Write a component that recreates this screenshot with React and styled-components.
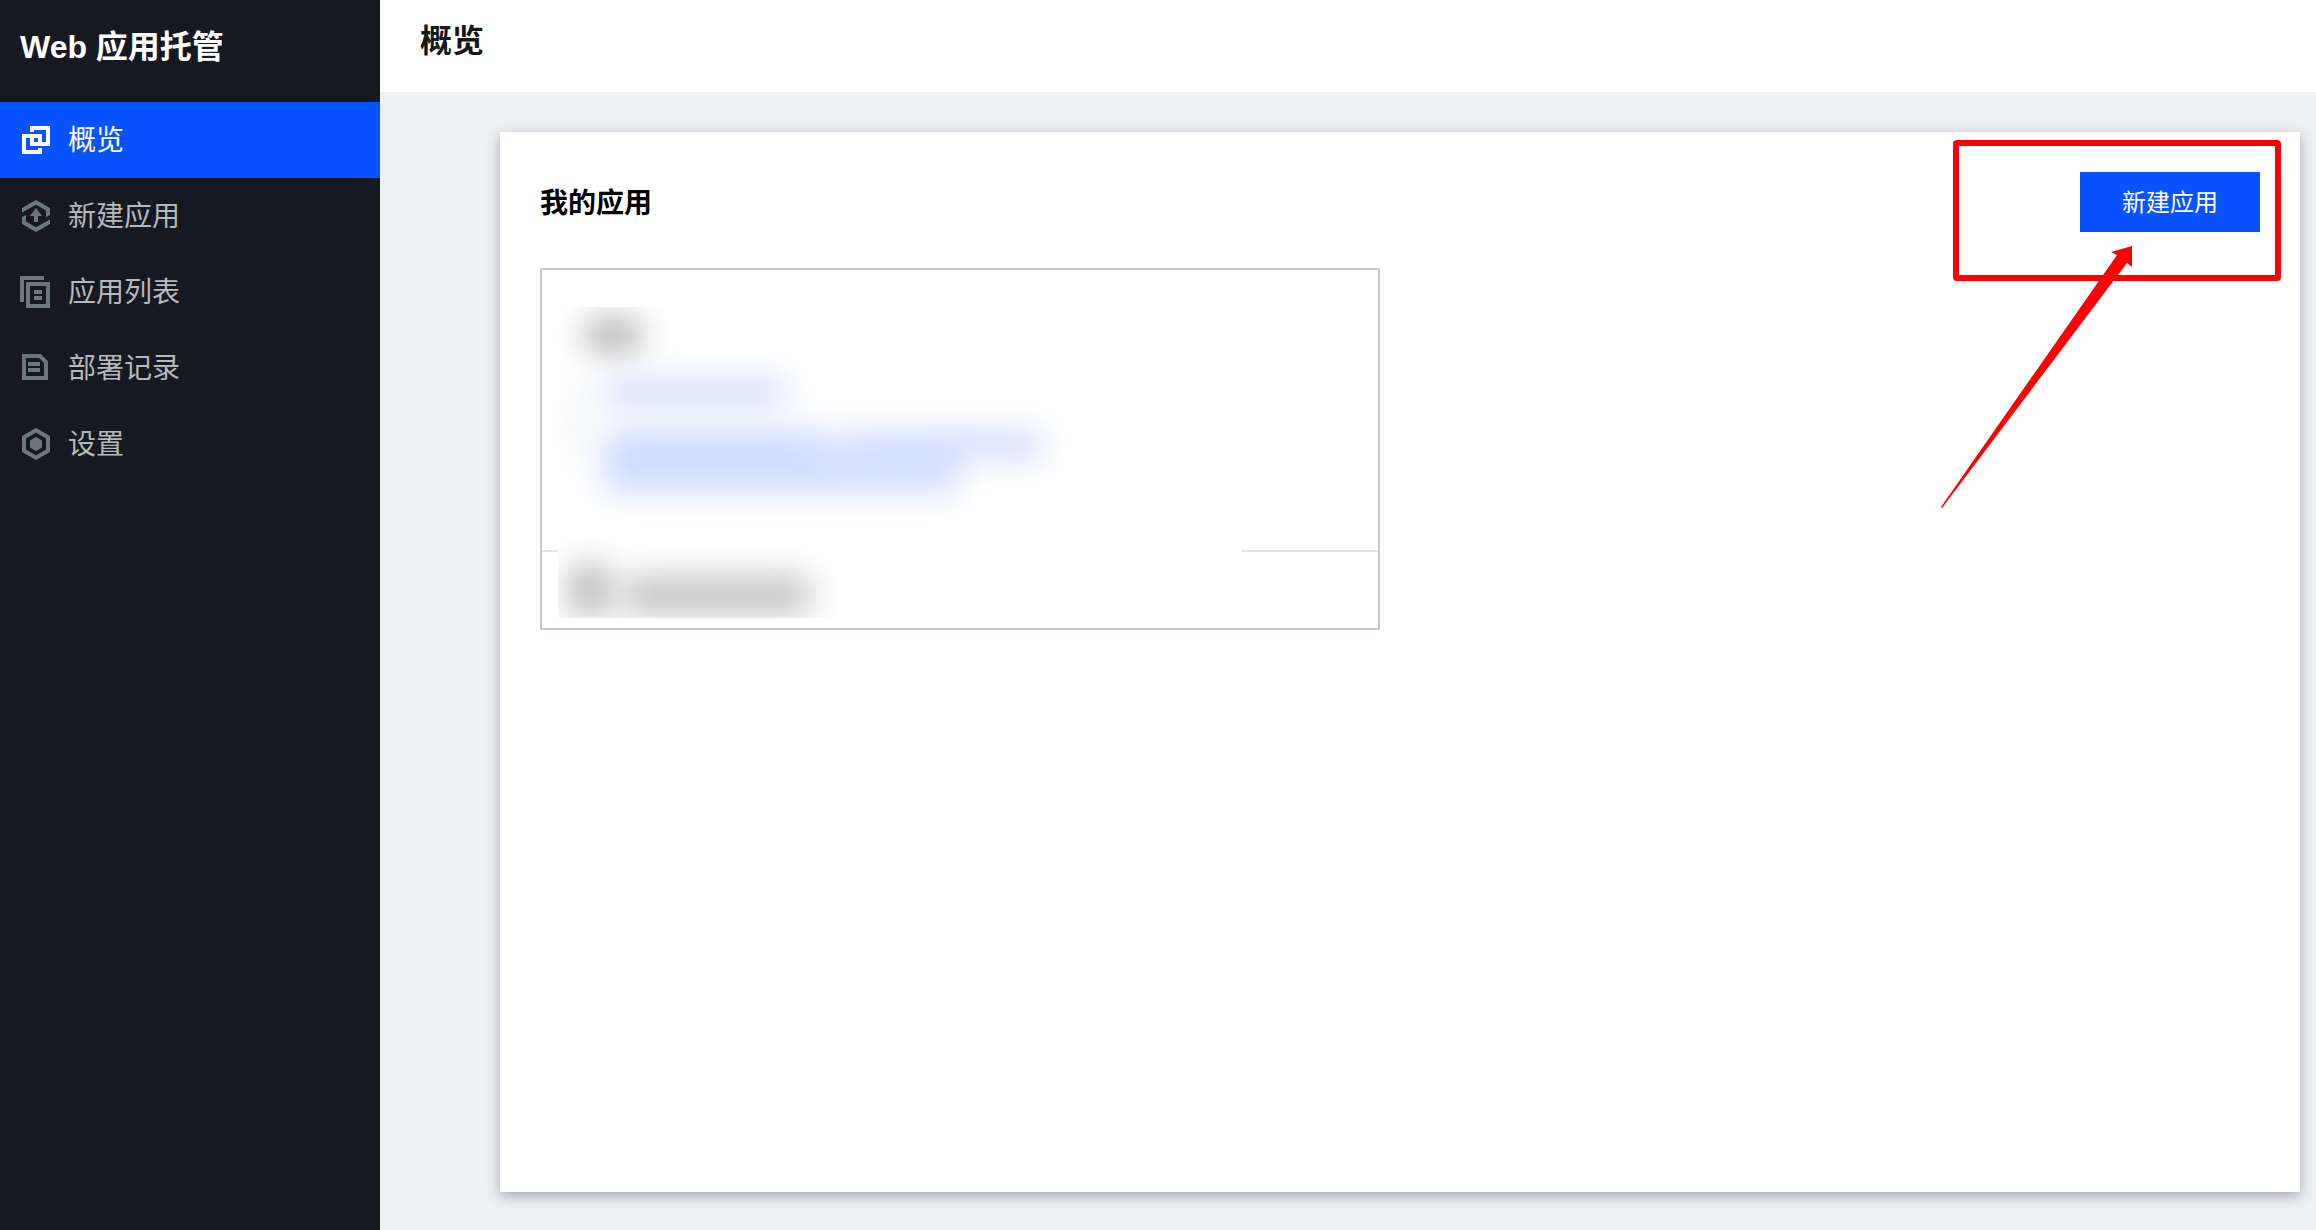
import React from 'react';
import styled, { createGlobalStyle } from 'styled-components';

const GlobalStyle = createGlobalStyle`
  * {
    box-sizing: border-box;
  }
  body {
    margin: 0;
    font-family: 'Liberation Sans', 'Noto Sans CJK SC', sans-serif;
    background-color: #eef0f4;
  }
  h1, h2, p, ul {
    margin: 0;
    padding: 0;
  }
`;

const Layout = styled.div`
  display: grid;
  grid-template-columns: 380px 1fr;
  min-height: 100vh;
`;

const Sidebar = styled.aside`
  background-color: #171922;
`;

const Brand = styled.p`
  height: 102px;
  padding: 23px 20px;
  color: #fff;
  font-size: 32px;
  font-weight: 700;
  line-height: 48px;
`;

const Menu = styled.ul`
  list-style: none;
`;

const MenuLink = styled.a`
  display: flex;
  align-items: center;
  gap: 16px;
  height: 76px;
  padding: 0 20px;
  color: ${({ $active }) => ($active ? '#fff' : '#b5b8bc')};
  background-color: ${({ $active }) => ($active ? '#0852ff' : 'transparent')};
  font-size: 28px;
  line-height: 40px;
  text-decoration: none;
  svg {
    width: 32px;
    height: 32px;
    flex: none;
    color: ${({ $active }) => ($active ? '#fff' : '#6b777e')};
  }
`;

const MenuLabel = styled.span`
  padding-top: 2px;
`;

const Main = styled.main`
  display: flex;
  flex-direction: column;
`;

const Header = styled.header`
  height: 92px;
  padding: 17px 40px;
  background-color: #fff;
`;

const PageTitle = styled.h1`
  color: #16181a;
  font-size: 32px;
  font-weight: 700;
  line-height: 48px;
`;

const Panel = styled.section`
  position: relative;
  flex: 1;
  margin: 40px 16px 38px 120px;
  padding: 40px;
  background-color: #fff;
  box-shadow: 0 4px 12px rgba(54, 58, 80, 0.4);
`;

const PanelHead = styled.div`
  display: flex;
  align-items: center;
  justify-content: space-between;
  margin-bottom: 36px;
`;

const PanelTitle = styled.h2`
  padding-top: 4px;
  color: #000;
  font-size: 28px;
  font-weight: 700;
  line-height: 40px;
`;

const CreateButton = styled.button`
  width: 180px;
  height: 60px;
  padding: 2px 0 0;
  border: 0;
  color: #fff;
  background-color: #0852ff;
  font-family: inherit;
  font-size: 24px;
  line-height: 36px;
`;

const AppCard = styled.article`
  position: relative;
  width: 49%;
  max-width: 840px;
  border: 2px solid #c4c8d5;
`;

const CardBody = styled.div`
  height: 280px;
`;

const CardFooter = styled.div`
  height: 78px;
  border-top: 2px solid #e2e5ea;
`;

// Covers the private details of the app
const Redacted = styled.div`
  position: absolute;
  inset: 37px 137px 10px 16px;
  overflow: hidden;
  background-color: #fff;
`;

const Smudges = styled.svg`
  display: block;
`;

const Highlight = styled.div`
  position: absolute;
  top: 8px;
  right: 19px;
  width: 328px;
  height: 141px;
  border: 6px solid #ff0005;
  border-radius: 4px;
  pointer-events: none;
`;

const Arrow = styled.svg`
  position: absolute;
  top: 114px;
  right: 168px;
  pointer-events: none;
`;

const OverviewIcon = () => (
  <svg viewBox="0 0 32 32" fill="none" stroke="currentColor" strokeWidth="4" aria-hidden="true">
    <path d="M12 8V4H28V20H12V14" />
    <path d="M20 24V28H4V12H20V18" />
  </svg>
);

const CreateIcon = () => (
  <svg viewBox="0 0 32 32" fill="currentColor" aria-hidden="true">
    <path d="M2 12.500V8L16 0L30 8V15L26 17V10.500L16 4.700Z" />
    <path d="M2 17L6 15V21.500L16 27.300L30 19.500V24L16 32L2 24Z" />
    <path d="M16 8L22 16H18V22H14V16H10Z" />
  </svg>
);

const ListIcon = () => (
  <svg viewBox="0 0 32 32" fill="none" stroke="currentColor" strokeWidth="4" aria-hidden="true">
    <path d="M24 2H2V26" />
    <path d="M8 8H28V30H8Z" />
    <path d="M14 16H22M14 22H22" />
  </svg>
);

const RecordIcon = () => (
  <svg viewBox="0 0 32 32" fill="none" stroke="currentColor" strokeWidth="4" aria-hidden="true">
    <path d="M4 4H20L26 10V26H4Z" />
    <path d="M8 12H20M8 18H20" />
  </svg>
);

const SettingIcon = () => (
  <svg viewBox="0 0 32 32" fill="none" stroke="currentColor" strokeWidth="4" aria-hidden="true">
    <path d="M16 2.300L28 9.200V22.800L16 29.700L4 22.800V9.200Z" />
    <path d="M16 9L22 12.500V19.500L16 23L10 19.500V12.500Z" fill="currentColor" stroke="none" />
  </svg>
);

const menuItems = [
  { label: '概览', icon: OverviewIcon, active: true },
  { label: '新建应用', icon: CreateIcon },
  { label: '应用列表', icon: ListIcon },
  { label: '部署记录', icon: RecordIcon },
  { label: '设置', icon: SettingIcon },
];

const AppSummary = () => (
  <AppCard>
    <CardBody />
    <CardFooter />
    <Redacted>
      <Smudges width="683" height="311" aria-hidden="true">
        <defs>
          <filter id="smudge" filterUnits="userSpaceOnUse" x="-60" y="-60" width="800" height="440" colorInterpolationFilters="sRGB">
            <feGaussianBlur stdDeviation="16" />
          </filter>
        </defs>
        <g filter="url(#smudge)">
          <rect x="28" y="14" width="54" height="28" fill="#a8a8a8" />
          <rect x="14" y="74" width="14" height="80" fill="#f0f2f2" />
          <rect x="46" y="72" width="182" height="26" fill="#cfdcff" />
          <rect x="46" y="124" width="210" height="30" fill="#ccdaff" />
          <rect x="256" y="124" width="44" height="30" fill="#dae3ff" />
          <rect x="300" y="124" width="184" height="28" fill="#d0dcff" />
          <rect x="46" y="154" width="354" height="32" fill="#d0ddff" />
          <rect x="12" y="258" width="38" height="50" fill="#b8b8b8" />
          <rect x="66" y="268" width="186" height="40" fill="#c6c6c6" />
        </g>
      </Smudges>
    </Redacted>
  </AppCard>
);

const App = () => (
  <>
    <GlobalStyle />
    <Layout>
      <Sidebar>
        <Brand>Web 应用托管</Brand>
        <nav>
          <Menu>
            {menuItems.map(({ label, icon: Icon, active }) => (
              <li key={label}>
                <MenuLink href="#" $active={active}>
                  <Icon />
                  <MenuLabel>{label}</MenuLabel>
                </MenuLink>
              </li>
            ))}
          </Menu>
        </nav>
      </Sidebar>
      <Main>
        <Header>
          <PageTitle>概览</PageTitle>
        </Header>
        <Panel>
          <PanelHead>
            <PanelTitle>我的应用</PanelTitle>
            <CreateButton type="button">新建应用</CreateButton>
          </PanelHead>
          <AppSummary />
          <Highlight />
          <Arrow width="192" height="264" viewBox="0 0 192 264" fill="#ff0005" aria-hidden="true">
            <path d="M192 0V21L187 17L2 262L1 261L177 9L171 6Z" />
          </Arrow>
        </Panel>
      </Main>
    </Layout>
  </>
);

export default App;
